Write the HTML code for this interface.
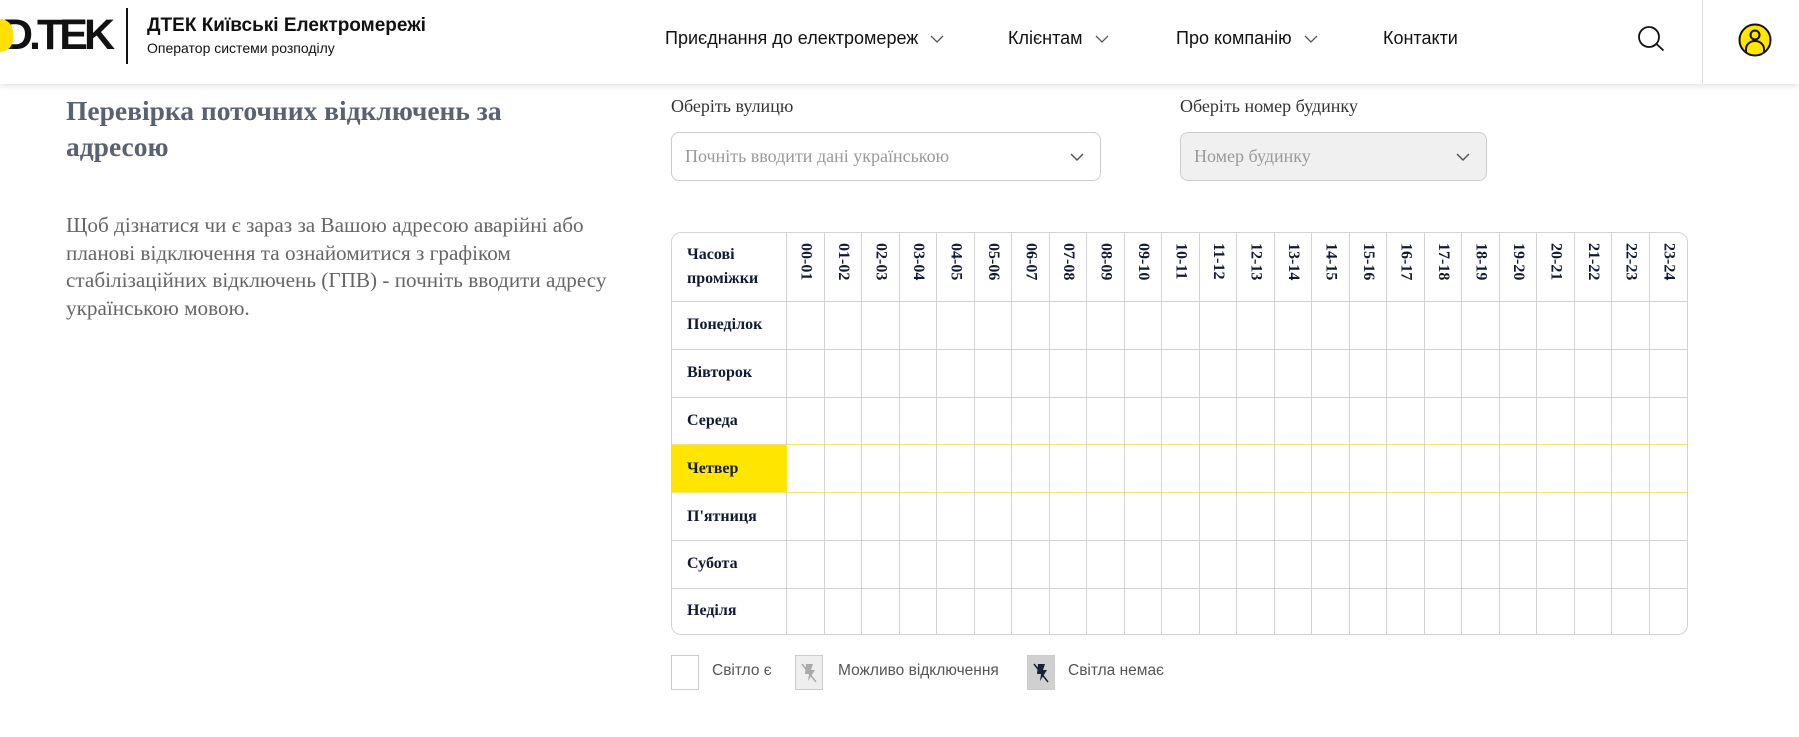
<!DOCTYPE html>
<html><head><meta charset="utf-8"><style>
*{margin:0;padding:0;box-sizing:border-box}
body{width:1799px;height:737px;background:#fff;position:relative;overflow:hidden;font-family:"Liberation Serif",serif}
.hdr{position:absolute;left:0;top:0;width:1799px;height:84px;background:#fff;box-shadow:0 2px 6px rgba(0,0,0,.12)}
.abs{position:absolute}
.nav{font-family:"Liberation Sans",sans-serif;font-size:18px;color:#111;top:28px}
.nav svg{vertical-align:middle;margin-left:12px}
.sans{font-family:"Liberation Sans",sans-serif}
table{border-collapse:separate;border-spacing:0}
.tb{position:absolute;left:671px;top:232px;width:1017px;height:403px;border:1px solid #d3d3d3;border-radius:10px;overflow:hidden}
.tb table{width:100%;height:100%;table-layout:fixed}
td,th{border-right:1px solid #d3d3d3;border-bottom:1px solid #d3d3d3;font-size:16px;font-weight:bold;color:#121a33;text-align:left}
tr td:last-child,tr th:last-child{border-right:none}
tr:last-child td{border-bottom:none}
th.h{vertical-align:top;padding-top:10px;text-align:center}
th.h span{writing-mode:vertical-rl;display:inline-block}
td.d{padding-left:15px}
tr.th td{border-bottom-color:#f2e27a}
tr.pre td{border-bottom-color:#f2e27a}
</style></head><body>
<div class="hdr">
 <div class="abs sans" style="left:2px;top:11px;font-size:43px;font-weight:bold;letter-spacing:-4px;color:#111">D.TEK</div>
 <div class="abs" style="left:0;top:19px;width:13px;height:33px;background:#ffe000;border-radius:0 16px 16px 0"></div>
 <div class="abs" style="left:126px;top:8px;width:2px;height:56px;background:#111"></div>
 <div class="abs sans" style="left:147px;top:15px;font-size:19px;font-weight:bold;color:#111">ДТЕК Київські Електромережі</div>
 <div class="abs sans" style="left:147px;top:40px;font-size:14px;color:#111">Оператор системи розподілу</div>
 <div class="abs nav" style="left:665px">Приєднання до електромереж<svg width="14" height="9" viewBox="0 0 14 9"><path d="M1 1l6 6 6-6" fill="none" stroke="#555" stroke-width="1.3"/></svg></div>
 <div class="abs nav" style="left:1008px">Клієнтам<svg width="14" height="9" viewBox="0 0 14 9"><path d="M1 1l6 6 6-6" fill="none" stroke="#555" stroke-width="1.3"/></svg></div>
 <div class="abs nav" style="left:1176px">Про компанію<svg width="14" height="9" viewBox="0 0 14 9"><path d="M1 1l6 6 6-6" fill="none" stroke="#555" stroke-width="1.3"/></svg></div>
 <div class="abs nav" style="left:1383px">Контакти</div>
 <svg class="abs" style="left:1636px;top:23px" width="32" height="32" viewBox="0 0 32 32"><circle cx="13" cy="14" r="10" fill="none" stroke="#111" stroke-width="1.8"/><path d="M20.5 21l7 6.5" stroke="#111" stroke-width="1.8"/></svg>
 <div class="abs" style="left:1702px;top:0;width:1px;height:84px;background:#ddd"></div>
 <svg class="abs" style="left:1737px;top:22px" width="36" height="36" viewBox="0 0 36 36"><circle cx="18" cy="18" r="15.5" fill="#ffe500" stroke="#111" stroke-width="2"/><circle cx="18" cy="13" r="4.5" fill="none" stroke="#111" stroke-width="2"/><path d="M9 31v-4a9 8 0 0 1 18 0v4" fill="none" stroke="#111" stroke-width="2"/></svg>
</div>
<div class="abs" style="left:66px;top:93px;font-size:27.5px;font-weight:bold;color:#5a6170;line-height:36px;width:520px">Перевірка поточних відключень за адресою</div>
<div class="abs" style="left:66px;top:212px;font-size:21.2px;color:#666;line-height:27.5px;width:580px">Щоб дізнатися чи є зараз за Вашою адресою аварійні або планові відключення та ознайомитися з графіком стабілізаційних відключень (ГПВ) - почніть вводити адресу українською мовою.</div>
<div class="abs" style="left:671px;top:96px;font-size:18px;color:#333">Оберіть вулицю</div>
<div class="abs" style="left:671px;top:132px;width:430px;height:49px;border:1px solid #ccc;border-radius:8px;font-size:18px;color:#999;padding:13px 13px">Почніть вводити дані українською
<svg style="position:absolute;right:16px;top:20px" width="14" height="9" viewBox="0 0 14 9"><path d="M1 1l6 6 6-6" fill="none" stroke="#555" stroke-width="1.5"/></svg></div>
<div class="abs" style="left:1180px;top:96px;font-size:18px;color:#333">Оберіть номер будинку</div>
<div class="abs" style="left:1180px;top:132px;width:307px;height:49px;border:1px solid #ccc;border-radius:8px;background:#f0f0f0;font-size:18px;color:#999;padding:13px 13px">Номер будинку
<svg style="position:absolute;right:16px;top:20px" width="14" height="9" viewBox="0 0 14 9"><path d="M1 1l6 6 6-6" fill="none" stroke="#555" stroke-width="1.5"/></svg></div>
<div class="tb"><table>
<colgroup><col style="width:115px"><col span="24"></colgroup>
<tr style="height:69px"><td class="d" style="line-height:24px">Часові проміжки</td>
<th class="h"><span>00-01</span></th><th class="h"><span>01-02</span></th><th class="h"><span>02-03</span></th><th class="h"><span>03-04</span></th><th class="h"><span>04-05</span></th><th class="h"><span>05-06</span></th><th class="h"><span>06-07</span></th><th class="h"><span>07-08</span></th><th class="h"><span>08-09</span></th><th class="h"><span>09-10</span></th><th class="h"><span>10-11</span></th><th class="h"><span>11-12</span></th><th class="h"><span>12-13</span></th><th class="h"><span>13-14</span></th><th class="h"><span>14-15</span></th><th class="h"><span>15-16</span></th><th class="h"><span>16-17</span></th><th class="h"><span>17-18</span></th><th class="h"><span>18-19</span></th><th class="h"><span>19-20</span></th><th class="h"><span>20-21</span></th><th class="h"><span>21-22</span></th><th class="h"><span>22-23</span></th><th class="h"><span>23-24</span></th></tr>
<tr><td class="d">Понеділок</td><td></td><td></td><td></td><td></td><td></td><td></td><td></td><td></td><td></td><td></td><td></td><td></td><td></td><td></td><td></td><td></td><td></td><td></td><td></td><td></td><td></td><td></td><td></td><td></td></tr>
<tr><td class="d">Вівторок</td><td></td><td></td><td></td><td></td><td></td><td></td><td></td><td></td><td></td><td></td><td></td><td></td><td></td><td></td><td></td><td></td><td></td><td></td><td></td><td></td><td></td><td></td><td></td><td></td></tr>
<tr class="pre"><td class="d">Середа</td><td></td><td></td><td></td><td></td><td></td><td></td><td></td><td></td><td></td><td></td><td></td><td></td><td></td><td></td><td></td><td></td><td></td><td></td><td></td><td></td><td></td><td></td><td></td><td></td></tr>
<tr class="th"><td class="d" style="background:#ffe500;border-right-color:#ffe500">Четвер</td><td></td><td></td><td></td><td></td><td></td><td></td><td></td><td></td><td></td><td></td><td></td><td></td><td></td><td></td><td></td><td></td><td></td><td></td><td></td><td></td><td></td><td></td><td></td><td></td></tr>
<tr><td class="d">П'ятниця</td><td></td><td></td><td></td><td></td><td></td><td></td><td></td><td></td><td></td><td></td><td></td><td></td><td></td><td></td><td></td><td></td><td></td><td></td><td></td><td></td><td></td><td></td><td></td><td></td></tr>
<tr><td class="d">Субота</td><td></td><td></td><td></td><td></td><td></td><td></td><td></td><td></td><td></td><td></td><td></td><td></td><td></td><td></td><td></td><td></td><td></td><td></td><td></td><td></td><td></td><td></td><td></td><td></td></tr>
<tr><td class="d">Неділя</td><td></td><td></td><td></td><td></td><td></td><td></td><td></td><td></td><td></td><td></td><td></td><td></td><td></td><td></td><td></td><td></td><td></td><td></td><td></td><td></td><td></td><td></td><td></td><td></td></tr>
</table></div>
<div class="abs" style="left:671px;top:655px;width:28px;height:35px;border:1px solid #ccc"></div>
<div class="abs sans" style="left:712px;top:662px;font-size:15.5px;color:#555">Світло є</div>
<div class="abs" style="left:795px;top:655px;width:28px;height:35px;border:1px solid #ccc;background:#eee"><svg width="26" height="33" viewBox="0 0 26 33"><path d="M10 8h7l-2 6h4l-7 11 1-7H9z" fill="#aaa"/><path d="M6 8l14 18" stroke="#aaa" stroke-width="1.5"/></svg></div>
<div class="abs sans" style="left:838px;top:662px;font-size:15.5px;color:#555">Можливо відключення</div>
<div class="abs" style="left:1027px;top:655px;width:28px;height:35px;background:#d0d0d0;border:1px solid #ccc"><svg width="26" height="33" viewBox="0 0 26 33"><path d="M10 8h7l-2 6h4l-7 11 1-7H9z" fill="#1a2238"/><path d="M6 8l14 18" stroke="#1a2238" stroke-width="1.5"/></svg></div>
<div class="abs sans" style="left:1068px;top:662px;font-size:15.5px;color:#555">Світла немає</div>
</body></html>
